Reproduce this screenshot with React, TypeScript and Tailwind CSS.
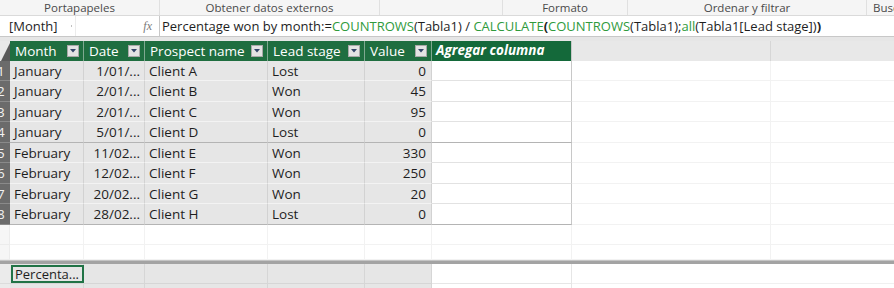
import cn from "clsx";

type Lead = {
  month: string;
  date: string;
  name: string;
  stage: string;
  value: number;
};

const ROWS: Lead[] = [
  { month: "January", date: "1/01/...", name: "Client A", stage: "Lost", value: 0 },
  { month: "January", date: "2/01/...", name: "Client B", stage: "Won", value: 45 },
  { month: "January", date: "2/01/...", name: "Client C", stage: "Won", value: 95 },
  { month: "January", date: "5/01/...", name: "Client D", stage: "Lost", value: 0 },
  { month: "February", date: "11/02...", name: "Client E", stage: "Won", value: 330 },
  { month: "February", date: "12/02...", name: "Client F", stage: "Won", value: 250 },
  { month: "February", date: "20/02...", name: "Client G", stage: "Won", value: 20 },
  { month: "February", date: "28/02...", name: "Client H", stage: "Lost", value: 0 },
];

const COLUMNS = [
  { label: "Month", w: "w-[74px]" },
  { label: "Date", w: "w-[61px]" },
  { label: "Prospect name", w: "w-[123px]" },
  { label: "Lead stage", w: "w-[97px]" },
  { label: "Value", w: "w-[67px]" },
];

const FONT = "font-['Open_Sans','Noto_Sans',sans-serif]";

function FilterButton() {
  return (
    <span className="flex h-[12px] w-[12px] shrink-0 items-center justify-center border border-[#a9a9a9] bg-[#e4e4e4]">
      <svg width="6" height="4" viewBox="0 0 6 4">
        <path d="M0 0h6L3 3.5z" fill="#34466a" />
      </svg>
    </span>
  );
}

function RibbonLabels() {
  const groups = [
    { label: "Portapapeles", w: "w-[160px]" },
    { label: "Obtener datos externos", w: "w-[220px]" },
    { label: "", w: "w-[123px]" },
    { label: "Formato", w: "w-[125px]" },
    { label: "Ordenar y filtrar", w: "w-[239px]" },
  ];
  return (
    <div className="flex h-[16px] border-b border-[#dadada] bg-[#f5f5f5] text-[11.5px] leading-[15px] text-[#4a4a4a]">
      {groups.map((g, i) => (
        <div key={i} className={cn("shrink-0 border-r border-[#e0e0e0] text-center", g.w)}>
          {g.label}
        </div>
      ))}
      <div className="flex-1 overflow-hidden whitespace-nowrap pl-[6px]">Buscar</div>
    </div>
  );
}

function FormulaBar() {
  const fn = "text-[#2f9a3c]";
  return (
    <div className="flex h-[21px] border-b border-[#c8c8c8] bg-white text-[13px] leading-[20px] text-[#1e1e1e]">
      <div className="relative w-[76px] shrink-0 border-r border-[#ececec] pl-[9px]">
        [Month]
        <span className="absolute right-[3px] top-[9px] h-[2px] w-[1px] bg-[#c0c0c0]" />
      </div>
      <div className="flex w-[83px] shrink-0 justify-end pr-[7px] font-['Liberation_Serif',serif] text-[12px] italic text-[#7a7a7a]">
        fx
      </div>
      <div className="flex-1 overflow-hidden whitespace-nowrap border-l border-[#c8c8c8] pl-[2px]">
        Percentage won by month:=<span className={fn}>COUNTROWS</span>(Tabla1) /{" "}
        <span className={fn}>CALCULATE</span>
        <span className="font-bold">(</span>
        <span className={fn}>COUNTROWS</span>(Tabla1);<span className={fn}>all</span>
        (Tabla1[Lead stage])<span className="font-bold">)</span>
      </div>
    </div>
  );
}

function HeaderRow() {
  return (
    <div className="flex h-[20px] text-[13.5px] leading-[19px]">
      <div className="w-[10px] shrink-0 bg-[#6b6b6b]">
        <svg width="10" height="20" viewBox="0 0 10 20">
          <rect width="10" height="20" fill="#e9e9e9" />
          <path d="M10 2V20H1z" fill="#5a5a5a" />
        </svg>
      </div>
      {COLUMNS.map((c) => (
        <div
          key={c.label}
          className={cn(
            "flex shrink-0 items-center justify-between border-r border-[#7fa890] bg-[#1f6e40] pl-[5px] pr-[4px] text-white",
            c.w,
          )}
        >
          <span className="whitespace-nowrap">{c.label}</span>
          <FilterButton />
        </div>
      ))}
      <div className="w-[140px] shrink-0 border-r border-[#c8c8c8] bg-[#14693a] pl-[4px] font-bold italic text-white">
        Agregar columna
      </div>
      <div className="w-[199px] shrink-0 border-r border-[#d6d6d6] bg-[#e8e8e8]" />
      <div className="flex-1 bg-[#e8e8e8]" />
    </div>
  );
}

function RowNumber({ n }: { n: number }) {
  return (
    <div className="w-[10px] shrink-0 overflow-hidden border-b border-[#8a8a8a] bg-[#6b6b6b] text-[#f2f2f2]">
      <span className="-ml-[3px] block">{n}</span>
    </div>
  );
}

function DataRow({ row, i }: { row: Lead; i: number }) {
  const strong = i === 3 || i === 7;
  const line = strong ? "border-b-[#b4b4b4]" : "border-b-[#f3f3f3]";
  const cell = cn("shrink-0 overflow-hidden whitespace-nowrap border-b border-r border-r-[#d2d2d2] bg-[#e6e6e6]", line);
  return (
    <div
      className={cn(
        "flex text-[13.5px] text-[#1e1e1e]",
        i % 2 === 0 ? "h-[20px] leading-[20px]" : "h-[21px] leading-[21px]",
      )}
    >
      <RowNumber n={i + 1} />
      <div className={cn(cell, "w-[74px] pl-[4px]")}>{row.month}</div>
      <div className={cn(cell, "w-[61px] pr-[4px] text-right")}>{row.date}</div>
      <div className={cn(cell, "w-[123px] pl-[4px]")}>{row.name}</div>
      <div className={cn(cell, "w-[97px] pl-[4px]")}>{row.stage}</div>
      <div className={cn(cell, "w-[67px] pr-[5px] text-right")}>{row.value}</div>
      <div
        className={cn(
          "w-[140px] shrink-0 border-b border-r border-r-[#c8c8c8] bg-white",
          strong ? "border-b-[#b4b4b4]" : "border-b-[#e2e2e2]",
        )}
      />
      <div className="w-[199px] shrink-0 border-b border-r border-[#f2f2f2] bg-white" />
      <div className="flex-1 border-b border-[#f2f2f2] bg-white" />
    </div>
  );
}

function EmptyRow({ h }: { h: string }) {
  const widths = ["w-[74px]", "w-[61px]", "w-[123px]", "w-[97px]", "w-[67px]", "w-[140px]", "w-[199px]"];
  return (
    <div className={cn("flex bg-white", h)}>
      <div className="w-[10px] shrink-0 border-b border-r border-[#ececec] bg-[#f6f6f6]" />
      {widths.map((w) => (
        <div key={w} className={cn("shrink-0 border-b border-r border-[#f2f2f2]", w)} />
      ))}
      <div className="flex-1 border-b border-[#f2f2f2]" />
    </div>
  );
}

function MeasureRow({ h, measure }: { h: string; measure?: string }) {
  const gray = ["w-[61px]", "w-[123px]", "w-[97px]", "w-[67px]"];
  return (
    <div className={cn("flex text-[13px] text-[#1e1e1e]", h)}>
      <div className="w-[10px] shrink-0 border-b border-[#dcdcdc] bg-[#ebebeb]" />
      <div className="w-[74px] shrink-0 border-b border-r border-[#d6d6d6] bg-[#e6e6e6] pl-px pt-px">
        {measure ? (
          <div className="h-[18px] w-[73px] overflow-hidden whitespace-nowrap border-2 border-[#217346] pl-[2px] leading-[14px]">
            {measure}
          </div>
        ) : null}
      </div>
      {gray.map((w) => (
        <div key={w} className={cn("shrink-0 border-b border-r border-[#d6d6d6] bg-[#e6e6e6]", w)} />
      ))}
      <div className="w-[140px] shrink-0 border-b border-r border-[#e6e6e6] bg-white" />
      <div className="flex-1 border-b border-[#f0f0f0] bg-white" />
    </div>
  );
}

export default function App() {
  return (
    <div className={cn("h-[288px] w-[894px] overflow-hidden bg-[#e8e8e8]", FONT)}>
      <RibbonLabels />
      <FormulaBar />
      <div className="h-[4px] bg-[#e6e6e6]" />
      <HeaderRow />
      {ROWS.map((r, i) => (
        <DataRow key={r.name} row={r} i={i} />
      ))}
      <EmptyRow h="h-[20px]" />
      <EmptyRow h="h-[15px]" />
      <div className="h-[4px] border-t border-[#c4c4c4] bg-[#a3a3a3]" />
      <MeasureRow h="h-[20px]" measure="Percenta..." />
      <MeasureRow h="h-[20px]" />
    </div>
  );
}
